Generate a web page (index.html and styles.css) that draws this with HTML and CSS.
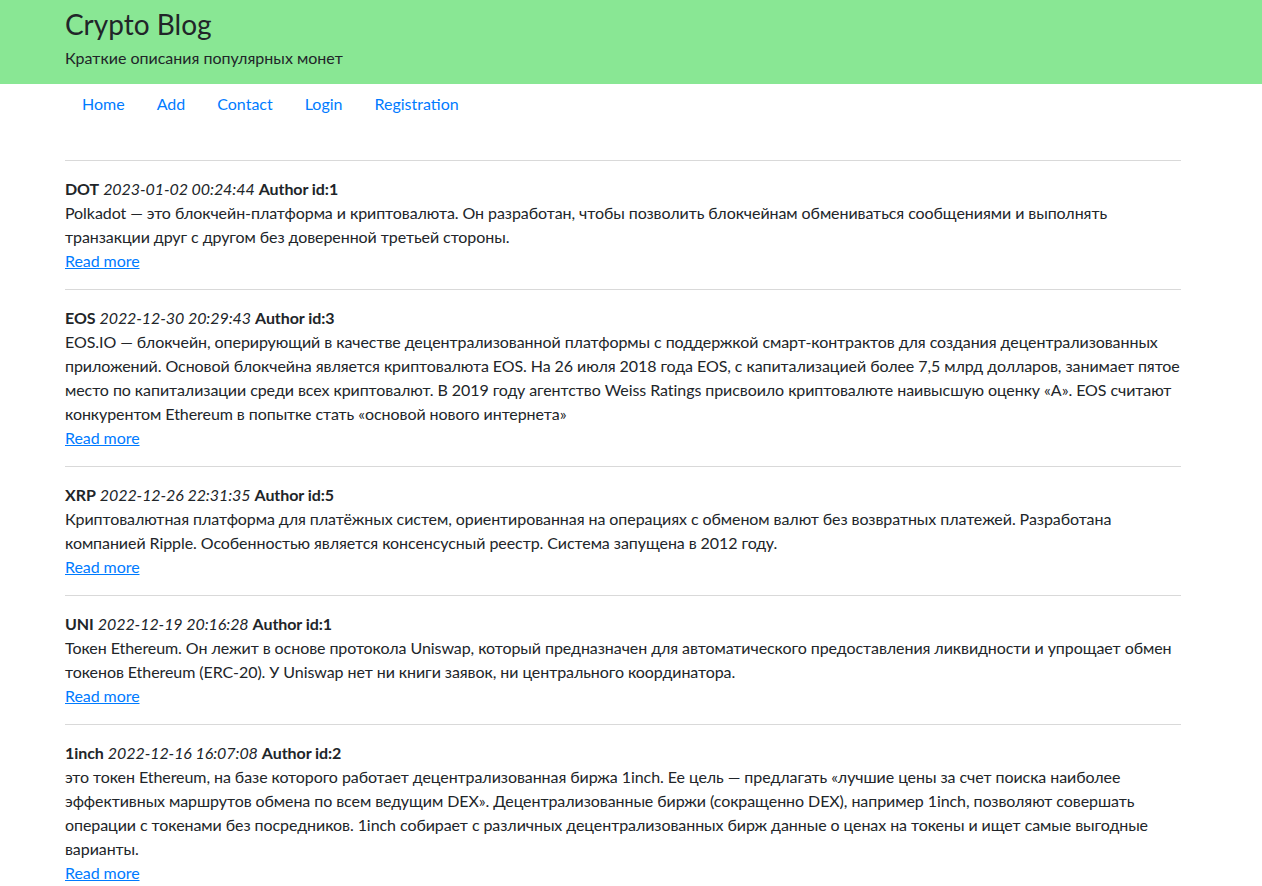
FILE: index.html
```html
<!DOCTYPE html>
<html lang="ru">
<head>
<meta charset="utf-8">
<title>Crypto Blog</title>
<link rel="stylesheet" href="styles.css">
</head>
<body>
<header class="jumbo">
  <div class="container">
    <h1 class="site-title">Crypto Blog</h1>
    <p class="lead">Краткие описания популярных монет</p>
  </div>
</header>
<div class="page">
<div class="container">
  <nav class="nav">
    <a class="nav-link" href="#">Home</a>
    <a class="nav-link" href="#">Add</a>
    <a class="nav-link" href="#">Contact</a>
    <a class="nav-link" href="#">Login</a>
    <a class="nav-link" href="#">Registration</a>
  </nav>
  <main class="posts">
    <article class="post">
      <div class="post-head"><b>DOT</b> <i>2023-01-02 00:24:44</i> <b>Author id:1</b></div>
      <div class="post-text">Polkadot — это блокчейн-платформа и криптовалюта. Он разработан, чтобы позволить блокчейнам обмениваться сообщениями и выполнять транзакции друг с другом без доверенной третьей стороны.</div>
      <a class="more" href="#">Read more</a>
    </article>
    <article class="post">
      <div class="post-head"><b>EOS</b> <i>2022-12-30 20:29:43</i> <b>Author id:3</b></div>
      <div class="post-text">EOS.IO — блокчейн, оперирующий в качестве децентрализованной платформы с поддержкой смарт-контрактов для создания децентрализованных приложений. Основой блокчейна является криптовалюта EOS. На 26 июля 2018 года EOS, с капитализацией более 7,5 млрд долларов, занимает пятое место по капитализации среди всех криптовалют. В 2019 году агентство Weiss Ratings присвоило криптовалюте наивысшую оценку «A». EOS считают конкурентом Ethereum в попытке стать «основой нового интернета»</div>
      <a class="more" href="#">Read more</a>
    </article>
    <article class="post">
      <div class="post-head"><b>XRP</b> <i>2022-12-26 22:31:35</i> <b>Author id:5</b></div>
      <div class="post-text">Криптовалютная платформа для платёжных систем, ориентированная на операциях с обменом валют без возвратных платежей. Разработана компанией Ripple. Особенностью является консенсусный реестр. Система запущена в 2012 году.</div>
      <a class="more" href="#">Read more</a>
    </article>
    <article class="post">
      <div class="post-head"><b>UNI</b> <i>2022-12-19 20:16:28</i> <b>Author id:1</b></div>
      <div class="post-text">Токен Ethereum. Он лежит в основе протокола Uniswap, который предназначен для автоматического предоставления ликвидности и упрощает обмен токенов Ethereum (ERC-20). У Uniswap нет ни книги заявок, ни центрального координатора.</div>
      <a class="more" href="#">Read more</a>
    </article>
    <article class="post">
      <div class="post-head"><b>1inch</b> <i>2022-12-16 16:07:08</i> <b>Author id:2</b></div>
      <div class="post-text">это токен Ethereum, на базе которого работает децентрализованная биржа 1inch. Ее цель — предлагать «лучшие цены за счет поиска наиболее эффективных маршрутов обмена по всем ведущим DEX». Децентрализованные биржи (сокращенно DEX), например 1inch, позволяют совершать операции с токенами без посредников. 1inch собирает с различных децентрализованных бирж данные о ценах на токены и ищет самые выгодные варианты.</div>
      <a class="more" href="#">Read more</a>
    </article>
  </main>
</div>
</div>
</body>
</html>
```

FILE: styles.css
```css
* { box-sizing: border-box; }
body {
  margin: 0;
  font-family: Lato, "Liberation Sans", sans-serif;
  font-size: 16px;
  line-height: 24px;
  color: #212529;
  background: #fff;
}
.container {
  width: 1116px;
  margin: 0 auto;
}
.jumbo {
  background: #89e794;
  height: 84px;
  padding: 4px 16px 0 0;
}
.page {
  padding-right: 16px;
}
.site-title {
  margin: 0;
  font-size: 28px;
  line-height: 40px;
  font-weight: 400;
}
.lead {
  margin: 2px 0 0;
  font-size: 16px;
  line-height: 24px;
}
.nav {
  display: flex;
  padding-bottom: 36px;
}
.nav-link {
  padding: 8px 16px;
  color: #007bff;
  text-decoration: none;
}
.nav-link:first-child { padding-left: 17px; }
.post {
  border-top: 1px solid #d9d9d9;
  padding: 16px 0;
  letter-spacing: -0.07px;
}
.post-head b { font-weight: 700; }
.more {
  color: #007bff;
  text-decoration: underline;
}
```
